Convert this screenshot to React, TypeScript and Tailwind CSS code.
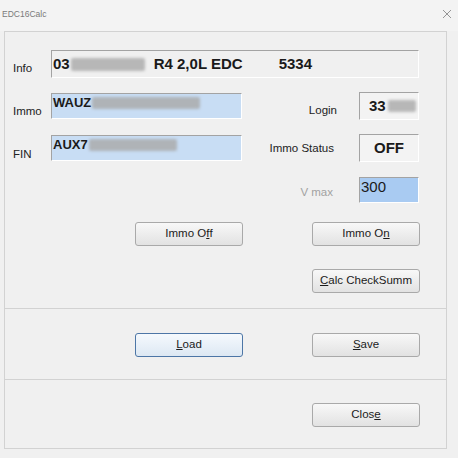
import React from "react";

const font = { fontFamily: '"Liberation Sans", Arial, sans-serif' };

const Blur: React.FC<{ w: number; h?: number; className?: string }> = ({ w, h = 12, className = "" }) => (
  <span
    className={`inline-block rounded-[2px] bg-[#a9a9a9] blur-[1.5px] opacity-80 ${className}`}
    style={{ width: w, height: h }}
  />
);

const Button: React.FC<{ children: React.ReactNode; primary?: boolean; className?: string }> = ({
  children,
  primary,
  className = "",
}) => (
  <button
    className={`flex h-[24px] w-[108px] items-center justify-center rounded-[3px] border text-[11.5px] text-[#1b1b1b] ${
      primary
        ? "border-[#4d76a6] bg-gradient-to-b from-[#f5f9fd] to-[#dde8f3]"
        : "border-[#a9a9a9] bg-gradient-to-b from-[#f8f8f8] to-[#e2e2e2]"
    } ${className}`}
  >
    {children}
  </button>
);

const sunken = "border-t border-l border-t-[#a3a3a3] border-l-[#a3a3a3] border-b border-r border-b-white border-r-white";

export default function App() {
  return (
    <div className="h-[458px] w-[458px] overflow-hidden bg-[#f0f0f0] text-[#222]" style={font}>
      {/* title bar */}
      <div className="flex h-[31px] items-start justify-between bg-[#f3f3f3] pl-[2px] pr-[6px] pt-[8px]">
        <span className="text-[8.5px] text-[#7a7a7a]">EDC16Calc</span>
        <svg width="10" height="10" viewBox="0 0 10 10" className="mt-[1px]">
          <path d="M1 1 L9 9 M9 1 L1 9" stroke="#8a8a8a" strokeWidth="0.9" />
        </svg>
      </div>

      {/* group box */}
      <div className="ml-[4px] h-[418px] w-[443px] border border-[#d2d2d2]">
        {/* section 1 */}
        <div className="h-[276px] pl-[8px]">
          <div className="flex w-[406px] items-center pt-[18px]">
            <span className="w-[38px] pt-[10px] text-[11.5px]">Info</span>
            <div className={`flex h-[28px] w-[368px] items-center ${sunken} pl-[1px] text-[15px] font-bold text-[#1a1a1a]`}>
              <span>03</span>
              <Blur w={74} h={13} className="ml-[1px]" />
              <span className="ml-[9px]">R4 2,0L EDC</span>
              <span className="ml-[36px]">5334</span>
            </div>
          </div>

          <div className="mt-[14px] flex h-[28px] w-[406px] items-center">
            <span className="w-[38px] pt-[12px] text-[11.5px]">Immo</span>
            <div className={`flex h-[26px] w-[191px] items-start ${sunken} bg-[#c8ddf4] pl-[1px] pt-[1px] text-[13px] font-bold leading-[16px] text-[#1a1a1a]`}>
              <span>WAUZ</span>
              <Blur w={108} className="ml-[1px] mt-[2px]" />
            </div>
            <span className="flex-1 pr-[22px] pt-[10px] text-right text-[11.5px]">Login</span>
            <div className={`flex h-[28px] w-[60px] items-center ${sunken} bg-[#f3f3f3] pl-[9px] text-[15px] font-bold text-[#1a1a1a]`}>
              <span>33</span>
              <Blur w={28} className="ml-[2px]" />
            </div>
          </div>

          <div className="mt-[14px] flex h-[28px] w-[406px] items-center">
            <span className="w-[38px] pt-[14px] text-[11.5px]">FIN</span>
            <div className={`flex h-[26px] w-[191px] items-start ${sunken} bg-[#c8ddf4] pl-[1px] pt-[1px] text-[13px] font-bold leading-[16px] text-[#1a1a1a]`}>
              <span>AUX7</span>
              <Blur w={88} className="ml-[1px] mt-[2px]" />
            </div>
            <span className="flex-1 pr-[25px] pt-[2px] text-right text-[11.5px]">Immo Status</span>
            <div className={`flex h-[28px] w-[60px] items-center justify-center ${sunken} bg-[#f3f3f3] text-[15px] font-bold text-[#1a1a1a]`}>
              OFF
            </div>
          </div>

          <div className="mt-[15px] flex h-[26px] w-[406px] items-center">
            <span className="flex-1 pr-[26px] pt-[6px] text-right text-[11.5px] text-[#a2a2a2]">V max</span>
            <div className={`h-[26px] w-[60px] ${sunken} bg-[#a9cbf2] pl-[1px] text-[15px] leading-[17px] text-[#1a1a1a]`}>300</div>
          </div>

          <div className="mt-[19px] flex">
            <Button className="ml-[122px]">
              Immo O<span className="underline">f</span>f
            </Button>
            <Button className="ml-[69px]">
              Immo O<span className="underline">n</span>
            </Button>
          </div>

          <div className="mt-[23px] flex">
            <Button className="ml-[299px]">
              <span className="underline">C</span>alc CheckSumm
            </Button>
          </div>
        </div>

        {/* section 2 */}
        <div className="h-[71px] border-t border-[#d2d2d2] pl-[8px] pt-[24px]">
          <div className="flex">
            <Button primary className="ml-[122px]">
              <span className="underline">L</span>oad
            </Button>
            <Button className="ml-[69px]">
              <span className="underline">S</span>ave
            </Button>
          </div>
        </div>

        {/* section 3 */}
        <div className="h-[69px] border-t border-[#d2d2d2] pl-[8px] pt-[23px]">
          <Button className="ml-[299px]">
            Clos<span className="underline">e</span>
          </Button>
        </div>
      </div>
    </div>
  );
}
